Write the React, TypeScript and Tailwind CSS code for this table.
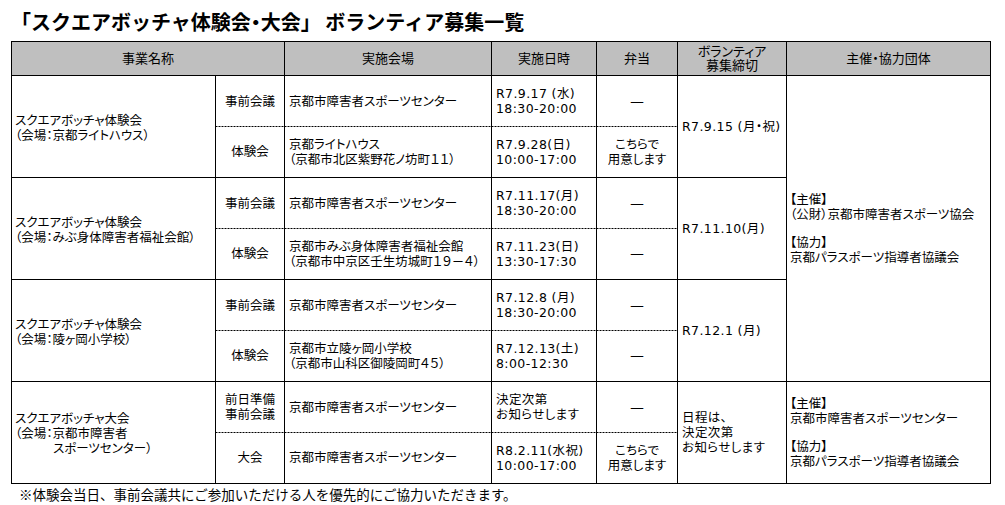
import React from "react";

type Sub = { type: string[]; venue: string[]; date: string[]; bento: string[] };
type Group = {
  rowA: string;
  rowB: string;
  name: React.ReactNode;
  subs: [Sub, Sub];
  deadline: string[];
};

const DASH = "―";

const groups: Group[] = [
  {
    rowA: "row-start-2",
    rowB: "row-start-3",
    name: (
      <>
        <div>スクエアボッチャ体験会</div>
        <div>（会場：京都ライトハウス）</div>
      </>
    ),
    subs: [
      { type: ["事前会議"], venue: ["京都市障害者スポーツセンター"], date: ["R7.9.17 (水)", "18:30-20:00"], bento: [DASH] },
      { type: ["体験会"], venue: ["京都ライトハウス", "（京都市北区紫野花ノ坊町１１）"], date: ["R7.9.28(日)", "10:00-17:00"], bento: ["こちらで", "用意します"] },
    ],
    deadline: ["R7.9.15 (月・祝)"],
  },
  {
    rowA: "row-start-4",
    rowB: "row-start-5",
    name: (
      <>
        <div>スクエアボッチャ体験会</div>
        <div>（会場：みぶ身体障害者福祉会館）</div>
      </>
    ),
    subs: [
      { type: ["事前会議"], venue: ["京都市障害者スポーツセンター"], date: ["R7.11.17(月)", "18:30-20:00"], bento: [DASH] },
      { type: ["体験会"], venue: ["京都市みぶ身体障害者福祉会館", "（京都市中京区壬生坊城町１９－４）"], date: ["R7.11.23(日)", "13:30-17:30"], bento: [DASH] },
    ],
    deadline: ["R7.11.10(月)"],
  },
  {
    rowA: "row-start-6",
    rowB: "row-start-7",
    name: (
      <>
        <div>スクエアボッチャ体験会</div>
        <div>（会場：陵ヶ岡小学校）</div>
      </>
    ),
    subs: [
      { type: ["事前会議"], venue: ["京都市障害者スポーツセンター"], date: ["R7.12.8 (月)", "18:30-20:00"], bento: [DASH] },
      { type: ["体験会"], venue: ["京都市立陵ヶ岡小学校", "（京都市山科区御陵岡町４５）"], date: ["R7.12.13(土)", "8:00-12:30"], bento: [DASH] },
    ],
    deadline: ["R7.12.1 (月)"],
  },
  {
    rowA: "row-start-8",
    rowB: "row-start-9",
    name: (
      <>
        <div>スクエアボッチャ大会</div>
        <div>（会場：京都市障害者</div>
        <div className="pl-[38px]">スポーツセンター）</div>
      </>
    ),
    subs: [
      { type: ["前日準備", "事前会議"], venue: ["京都市障害者スポーツセンター"], date: ["決定次第", "お知らせします"], bento: [DASH] },
      { type: ["大会"], venue: ["京都市障害者スポーツセンター"], date: ["R8.2.11(水祝)", "10:00-17:00"], bento: ["こちらで", "用意します"] },
    ],
    deadline: ["日程は、", "決定次第", "お知らせします"],
  },
];

const cell = "border-l border-black flex flex-col justify-center";
const solidTop = "border-t border-black";
const dashed =
  "bg-[linear-gradient(to_right,#000_2px,transparent_2px)] bg-[length:3px_1px] bg-repeat-x bg-top";
const hdr = "border-l border-t border-black bg-[#bfbfbf] flex flex-col items-center justify-center text-[13px] leading-[14px] row-start-1";

function Lines({ items }: { items: string[] }) {
  return (
    <>
      {items.map((t, i) => (
        <div key={i}>{t}</div>
      ))}
    </>
  );
}

function Organizer({ main, coop }: { main: string; coop: string }) {
  return (
    <div className="pl-[3px]">
      <div>【主催】</div>
      <div>{main}</div>
      <div className="mt-[13px]">【協力】</div>
      <div>{coop}</div>
    </div>
  );
}

export default function App() {
  return (
    <div className="w-[1005px] h-[505px] bg-white text-black font-['DejaVu_Sans','Noto_Sans_CJK_JP',sans-serif] [font-feature-settings:'palt']">
      <div className="h-[41px] pl-[11px] pt-[8px] text-[20px] leading-[28px] font-bold font-['Noto_Sans_CJK_JP',sans-serif] [font-feature-settings:normal]">
        「スクエアボッチャ体験会<span className="[font-feature-settings:'palt']">・</span>大会」 ボランティア募集一覧
      </div>
      <div className="ml-[11px] w-[980px] grid grid-cols-[204px_69px_207px_105px_81px_109px_204px] grid-rows-[34px_repeat(8,51px)] border-r border-b border-black text-[12.5px] leading-[15px]">
        <div className={`${hdr} col-start-1 col-span-2`}>事業名称</div>
        <div className={`${hdr} col-start-3`}>実施会場</div>
        <div className={`${hdr} col-start-4`}>実施日時</div>
        <div className={`${hdr} col-start-5`}>弁当</div>
        <div className={`${hdr} col-start-6`}>
          <div>ボランティア</div>
          <div>募集締切</div>
        </div>
        <div className={`${hdr} col-start-7`}>主催・協力団体</div>

        {groups.map((g, gi) => (
          <React.Fragment key={gi}>
            <div className={`${cell} ${solidTop} col-start-1 ${g.rowA} row-span-2 pl-[3px] pt-[2px]`}>{g.name}</div>
            {g.subs.map((s, si) => {
              const row = si === 0 ? g.rowA : g.rowB;
              const top = si === 0 ? solidTop : dashed;
              return (
                <React.Fragment key={si}>
                  <div className={`${cell} ${top} col-start-2 ${row} items-center text-center`}>
                    <Lines items={s.type} />
                  </div>
                  <div className={`${cell} ${top} col-start-3 ${row} pl-[4px]`}>
                    <Lines items={s.venue} />
                  </div>
                  <div className={`${cell} ${top} col-start-4 ${row} pl-[4px] tracking-[0.4px]`}>
                    <Lines items={s.date} />
                  </div>
                  <div className={`${cell} ${top} col-start-5 ${row} items-center text-center`}>
                    <Lines items={s.bento} />
                  </div>
                </React.Fragment>
              );
            })}
            <div className={`${cell} ${solidTop} col-start-6 ${g.rowA} row-span-2 pl-[4px] tracking-[0.4px]`}>
              <Lines items={g.deadline} />
            </div>
          </React.Fragment>
        ))}

        <div className={`${cell} ${solidTop} col-start-7 row-start-2 row-span-6`}>
          <Organizer main="（公財）京都市障害者スポーツ協会" coop="京都パラスポーツ指導者協議会" />
        </div>
        <div className={`${cell} ${solidTop} col-start-7 row-start-8 row-span-2`}>
          <Organizer main="京都市障害者スポーツセンター" coop="京都パラスポーツ指導者協議会" />
        </div>
      </div>
      <div className="pl-[19px] text-[13.5px] leading-[20px] font-['Noto_Sans_CJK_JP',sans-serif] [font-feature-settings:normal]">
        ※体験会当日、事前会議共にご参加いただける人を優先的にご協力いただきます。
      </div>
    </div>
  );
}
